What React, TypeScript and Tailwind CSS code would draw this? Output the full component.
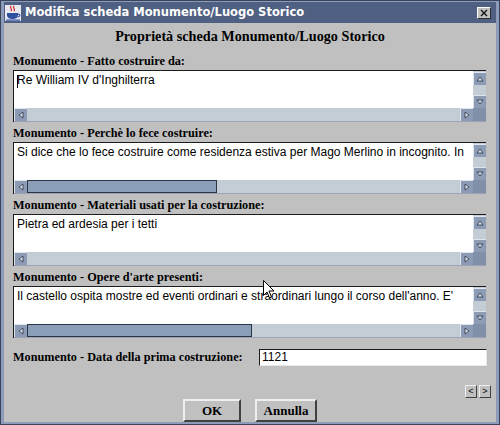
import React from 'react';

const serif = { fontFamily: '"Liberation Serif", "Times New Roman", serif' };
const sans = { fontFamily: '"Liberation Sans", Arial, sans-serif' };

const Arrow: React.FC<{ dir: 'up' | 'down' | 'left' | 'right' }> = ({ dir }) => {
  const pts = {
    up: '1,5 4,1 7,5',
    down: '1,1 4,5 7,1',
    left: '5,1 1,4 5,7',
    right: '1,1 5,4 1,7',
  }[dir];
  const box = dir === 'up' || dir === 'down' ? '0 0 8 6' : '0 0 6 8';
  return (
    <svg viewBox={box} className={dir === 'up' || dir === 'down' ? 'w-[8px] h-[6px]' : 'w-[6px] h-[8px]'}>
      <polygon points={pts} fill="#d8dee8" stroke="#2a3444" strokeWidth="0.8" />
    </svg>
  );
};

const ScrollBtn: React.FC<{ dir: 'up' | 'down' | 'left' | 'right' }> = ({ dir }) => (
  <div className="w-[13px] h-[13px] shrink-0 flex items-center justify-center bg-[#8c9cb4] border-t border-l border-[#dfe5ee] border-r-[#3c4658] border-b-[#3c4658]">
    <Arrow dir={dir} />
  </div>
);

const TextArea: React.FC<{ text: string; thumb?: number; caret?: boolean }> = ({ text, thumb, caret }) => (
  <div className="flex flex-col h-[52px] w-[473px] border-t border-l border-[#1c1c1c] bg-[#c4ccd6]">
    <div className="flex h-[37px]">
      <div className="flex-1 bg-white overflow-hidden whitespace-nowrap pl-[3px] pt-[2px] text-[12px] leading-[15px] text-black relative" style={sans}>
        {caret && <span className="absolute left-[3px] top-[4px] w-[1px] h-[13px] bg-black" />}
        {text}
      </div>
      <div className="w-[13px] flex flex-col justify-between bg-[#c4ccd6] pt-[1px]">
        <ScrollBtn dir="up" />
        <ScrollBtn dir="down" />
      </div>
    </div>
    <div className="flex h-[14px] border-b border-[#9aa4b2]">
      <div className="flex-1 flex bg-[#c4ccd6]">
        <ScrollBtn dir="left" />
        <div className="flex-1 flex">
          {thumb ? (
            <div className="h-[13px] bg-[#8a9eb8] border border-[#2a3444]" style={{ width: thumb }} />
          ) : null}
        </div>
        <ScrollBtn dir="right" />
      </div>
      <div className="w-[13px] h-[13px] bg-[#8090a8]" />
    </div>
  </div>
);

const Section: React.FC<{ label: string; children: React.ReactNode }> = ({ label, children }) => (
  <div className="flex flex-col mt-[3px] first:mt-0">
    <div className="h-[16px] leading-[16px] text-[12.25px] font-bold text-black mb-[1px]" style={serif}>
      {label}
    </div>
    {children}
  </div>
);

const JavaIcon: React.FC = () => (
  <svg viewBox="0 0 16 16" className="w-[16px] h-[16px]">
    <rect x="0" y="0" width="16" height="16" fill="#e8e8f0" />
    <path d="M6 1 C4 3 8 4 6 6 M9 1 C7 3 11 4 9 6" stroke="#d02020" strokeWidth="1.2" fill="none" />
    <path d="M2 8 H13 V10 C13 13 10 14 7.5 14 C5 14 2 13 2 10 Z" fill="#3050a0" />
    <path d="M13 9 C15.5 9 15.5 12 12.5 12" stroke="#3050a0" strokeWidth="1.2" fill="none" />
    <rect x="1" y="14.5" width="14" height="1.2" fill="#3050a0" />
  </svg>
);

const Cursor: React.FC = () => (
  <svg viewBox="0 0 12 19" className="absolute left-[262px] top-[279px] w-[12px] h-[19px] pointer-events-none">
    <path d="M0.5 0.5 L0.5 15.5 L4 12 L6.5 18 L8.5 17 L6 11 L11 11 Z" fill="white" stroke="black" strokeWidth="1" />
  </svg>
);

const Btn: React.FC<{ label: string; w: string }> = ({ label, w }) => (
  <div
    className={`${w} h-[23px] flex items-center justify-center bg-[#c0c0c0] border-t-2 border-l-2 border-[#eeeeee] border-r-2 border-b-2 border-r-[#404040] border-b-[#404040] text-[13px] font-bold text-black`}
    style={serif}
  >
    {label}
  </div>
);

const SmallBtn: React.FC<{ label: string }> = ({ label }) => (
  <div className="w-[12px] h-[13px] flex items-center justify-center bg-[#c0c0c0] border-t border-l border-[#f0f0f0] border-r border-b border-r-[#404040] border-b-[#404040] text-[9px] leading-none text-black" style={sans}>
    {label}
  </div>
);

export default function App() {
  return (
    <div className="relative w-[500px] h-[425px] bg-[#8c9cba] border border-[#3a4458] flex flex-col px-[3px] pb-[3px] pt-[1px]">
      <div className="h-[21px] shrink-0 bg-[#4f6082] flex items-center pl-[1px] pr-[4px]">
        <JavaIcon />
        <div className="ml-[4px] flex-1 text-white text-[11.5px] font-bold" style={{ fontFamily: '"DejaVu Sans", Verdana, sans-serif' }}>
          Modifica scheda Monumento/Luogo Storico
        </div>
        <div className="w-[14px] h-[12px] bg-[#c0c0c0] border-t border-l border-white border-r border-b border-r-[#303030] border-b-[#303030] flex items-center justify-center mr-[1px]">
          <svg viewBox="0 0 8 8" className="w-[8px] h-[8px]">
            <path d="M1 1 L7 7 M7 1 L1 7" stroke="#101010" strokeWidth="1.4" />
          </svg>
        </div>
      </div>
      <div className="flex-1 bg-[#c0c0c0] flex flex-col pl-[9px] pr-[5px]">
        <div className="h-[18px] mt-[4px] text-center text-[14.2px] leading-[18px] font-bold text-black pr-[4px]" style={serif}>
          Proprietà scheda Monumento/Luogo Storico
        </div>
        <div className="flex flex-col mt-[8px]">
          <Section label="Monumento - Fatto costruire da:">
            <TextArea text="Re William IV d'Inghilterra" caret />
          </Section>
          <Section label="Monumento - Perchè lo fece costruire:">
            <TextArea text="Si dice che lo fece costruire come residenza estiva per Mago Merlino in incognito. In" thumb={190} />
          </Section>
          <Section label="Monumento - Materiali usati per la costruzione:">
            <TextArea text="Pietra ed ardesia per i tetti" />
          </Section>
          <Section label="Monumento - Opere d'arte presenti:">
            <TextArea text="Il castello ospita mostre ed eventi ordinari e straordinari lungo il corso dell'anno. E'" thumb={225} />
          </Section>
        </div>
        <div className="flex items-center mt-[10px] pr-[4px]">
          <div className="flex-1 text-[12.25px] font-bold text-black" style={serif}>
            Monumento - Data della prima costruzione:
          </div>
          <div className="w-[228px] h-[17px] bg-white border-t border-l border-[#1c1c1c] border-r border-b border-r-[#e8e8e8] border-b-[#e8e8e8] pl-[2px] text-[12px] leading-[15px] text-black" style={sans}>
            1121
          </div>
        </div>
        <div className="flex justify-end gap-[2px] mt-[19px]">
          <SmallBtn label="<" />
          <SmallBtn label=">" />
        </div>
        <div className="flex justify-center gap-[14px] mt-[1px] pr-[4px]">
          <Btn label="OK" w="w-[58px]" />
          <Btn label="Annulla" w="w-[62px]" />
        </div>
      </div>
      <Cursor />
    </div>
  );
}
